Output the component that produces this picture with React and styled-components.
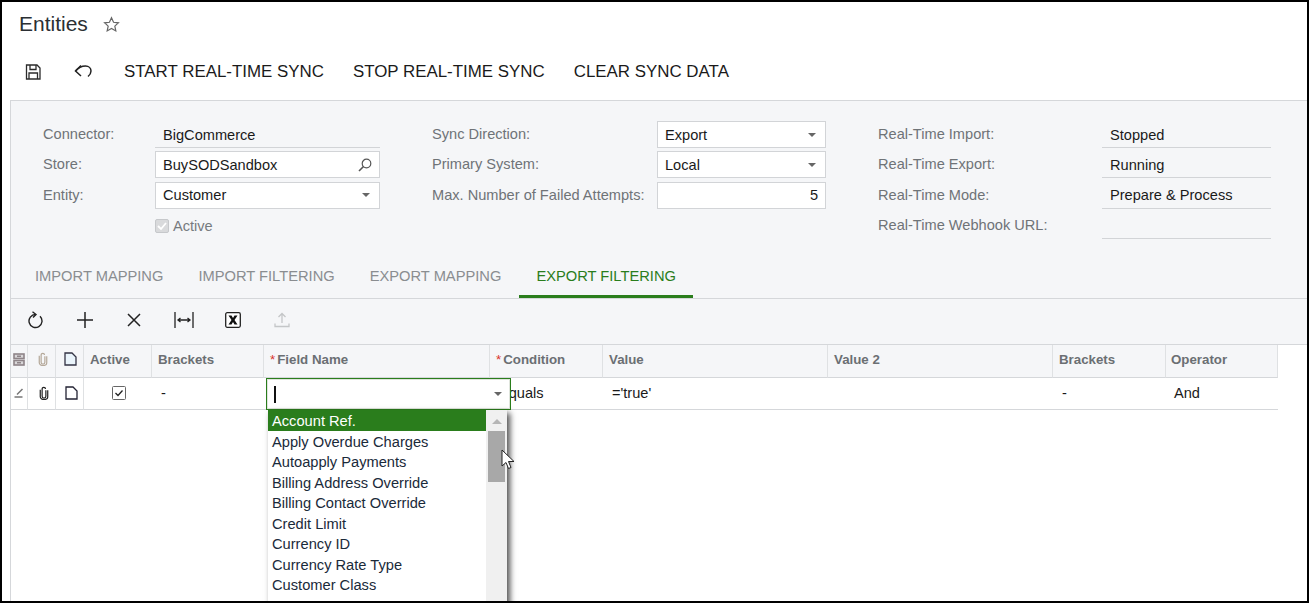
import React from "react";
import styled, { createGlobalStyle } from "styled-components";

const GlobalStyle = createGlobalStyle`
  html, body {
    margin: 0;
    padding: 0;
    background: #fff;
    overflow: hidden;
  }
  body {
    font-family: "Liberation Sans", Arial, sans-serif;
    font-size: 14.6px;
    color: #1c1c1c;
  }
`;

const Frame = styled.div`
  box-sizing: border-box;
  width: 1309px;
  height: 603px;
  border: 2px solid #000;
  overflow: hidden;
  background: #fff;
  position: relative;
  display: flex;
  flex-direction: column;
`;

const Title = styled.div`
  display: flex;
  align-items: center;
  gap: 15px;
  height: 44px;
  flex: none;
  padding-left: 17px;
  font-size: 21px;
  color: #2b2f33;
`;

const TopBar = styled.div`
  display: flex;
  align-items: center;
  box-sizing: border-box;
  height: 54px;
  flex: none;
  padding: 0 0 2px 22px;
`;

const IconBtn = styled.span`
  display: inline-flex;
  width: 20px;
  margin-right: ${(p) => p.$gap || 0}px;
`;

const TextBtn = styled.span`
  font-size: 16.9px;
  color: #1a1a1a;
  margin-right: 29px;
`;

const Body = styled.div`
  flex: 1;
  margin-left: 8px;
  border-left: 1px solid #d5d7da;
`;

const Summary = styled.div`
  background: #f5f6f8;
  border-top: 1px solid #d5d7da;
  height: 159px;
  padding-top: 19px;
  box-sizing: border-box;
  display: grid;
  grid-template-columns: 389px 446px 1fr;
`;

const FormCol = styled.div`
  display: grid;
  grid-template-columns: ${(p) => p.$label}px ${(p) => p.$field}px;
  grid-auto-rows: 30.4px;
  padding-left: ${(p) => p.$pad}px;
`;

const Label = styled.div`
  color: #6f7377;
  font-size: 14.6px;
  line-height: 28px;
  white-space: nowrap;
`;

const field = `
  box-sizing: border-box;
  height: 27px;
  align-self: start;
  margin-top: 1px;
  display: flex;
  align-items: center;
  font-size: 14.6px;
  color: #1a1a1a;
`;

const Readonly = styled.div`
  ${field}
  padding: 1px 8px 0;
  border-bottom: 1px solid #d2d4d7;
`;

const Input = styled.div`
  ${field}
  justify-content: ${(p) => (p.$right ? "flex-end" : "space-between")};
  padding: 0 7px;
  background: #fff;
  border: 1px solid #d2d4d7;
`;

const Caret = styled.span`
  width: 0;
  height: 0;
  border-left: 4px solid transparent;
  border-right: 4px solid transparent;
  border-top: 4px solid #666;
  margin-right: ${(p) => p.$mr || 0}px;
`;

const CheckRow = styled.div`
  grid-column: 2;
  display: flex;
  align-items: center;
  gap: 4px;
  height: 30px;
  color: #777b7f;
`;

const Disabled = styled.span`
  box-sizing: border-box;
  width: 14px;
  height: 14px;
  border: 1px solid #c6c8cb;
  border-radius: 2px;
  background: #d9dadc;
  display: inline-flex;
`;

const Tabs = styled.div`
  display: flex;
  height: 39px;
  padding-left: 6.5px;
  border-bottom: 1px solid #d5d7da;
  background: #f5f6f8;
`;

const Tab = styled.div`
  box-sizing: border-box;
  height: 39px;
  padding: 9px 17.5px 0;
  font-size: 14.7px;
  color: ${(p) => (p.$active ? "#2a7d1c" : "#8a8d90")};
  border-bottom: ${(p) => (p.$active ? "3px solid #2a7d1c" : "none")};
`;

const GridBar = styled.div`
  display: flex;
  align-items: center;
  height: 46px;
  padding: 0 0 4px 17px;
  background: #f5f6f8;
  border-bottom: 1px solid #d5d7da;
  box-sizing: border-box;
`;

const Table = styled.div`
  width: 1267px;
  display: grid;
  grid-template-columns: 17px 28px 28px 68px 112px 226px 113px 225px 225px 113px 112px;
`;

const Head = styled.div`
  box-sizing: border-box;
  height: 33px;
  background: #f5f6f8;
  border-right: 1px solid #dfe1e3;
  border-bottom: 1px solid #d5d7da;
  display: flex;
  align-items: center;
  justify-content: ${(p) => (p.$center ? "center" : "flex-start")};
  padding-left: ${(p) => (p.$center ? p.$shift || 0 : p.$pad || 6)}px;
  padding-bottom: 4px;
  font-size: 13.3px;
  font-weight: 700;
  color: #6b6f73;
`;

const Req = styled.span`
  color: #d9332b;
  margin-right: 2px;
  font-weight: 400;
`;

const Cell = styled.div`
  box-sizing: border-box;
  height: 32px;
  background: #fff;
  border-bottom: 1px solid #d5d7da;
  border-right: ${(p) => (p.$line ? "1px solid #dfe1e3" : "none")};
  display: flex;
  align-items: center;
  justify-content: ${(p) => (p.$center ? "center" : "flex-start")};
  padding-left: ${(p) => (p.$center ? p.$shift || 0 : p.$pad || 9)}px;
  padding-bottom: 1px;
  font-size: 14.6px;
  color: #1a1a1a;
  white-space: nowrap;
`;

const Editor = styled.div`
  position: absolute;
  left: 264px;
  top: 376px;
  width: 245px;
  height: 32px;
  box-sizing: border-box;
  background: #fff;
  border: 1px solid #2a7d1c;
  box-shadow: inset 0 0 0 1px #dfe5dc;
  display: flex;
  align-items: center;
  justify-content: space-between;
  padding: 0 8px 0 7px;
`;

const TextCursor = styled.span`
  width: 2px;
  height: 17px;
  background: #111;
`;

const DropDown = styled.div`
  position: absolute;
  left: 1px;
  top: 31px;
  width: 239px;
  height: 240px;
  display: flex;
  background: #fff;
  box-shadow: 3px 3px 6px rgba(0, 0, 0, 0.7);
`;

const ListItems = styled.div`
  flex: 1;
`;

const ListItem = styled.div`
  height: 20.5px;
  line-height: 22px;
  padding-left: 4px;
  font-size: 14.66px;
  color: ${(p) => (p.$selected ? "#fff" : "#1a2a3a")};
  background: ${(p) => (p.$selected ? "#2a7d1c" : "transparent")};
`;

const ScrollTrack = styled.div`
  width: 21px;
  flex: none;
  background: #f0f0f0;
  display: flex;
  flex-direction: column;
  align-items: center;
  padding-top: 9px;
  box-sizing: border-box;
`;

const ScrollUp = styled.span`
  width: 0;
  height: 0;
  border-left: 5px solid transparent;
  border-right: 5px solid transparent;
  border-bottom: 5px solid #b5b5b5;
`;

const ScrollThumb = styled.span`
  width: 17px;
  height: 51px;
  background: #a8a8a8;
  margin-top: 7px;
`;

const Pointer = styled.svg`
  position: absolute;
  left: 499px;
  top: 447px;
`;

const SaveIcon = () => (
  <svg width="18" height="18" viewBox="0 0 18 18" fill="none" stroke="#2b2b2b" strokeWidth="1.3">
    <path d="M2.5 2H13l3 3v11H2.500z" />
    <path d="M6 2v4.500h6V2M5 16v-6h8.500v6" />
  </svg>
);

const UndoIcon = () => (
  <svg width="20" height="16" viewBox="0 0 20 16" fill="none" stroke="#222" strokeWidth="1.5">
    <path d="M7 1.500L1.500 7 7 12" />
    <path d="M1.500 7C4 4 8 2 11.500 2c3.300 0 5.500 2.200 5.500 5 0 2.500-1.500 4.300-3 5.500" />
  </svg>
);

const RefreshIcon = () => (
  <svg width="16" height="18" viewBox="0 0 16 18" fill="none" stroke="#222" strokeWidth="1.4">
    <path d="M7.500 3.500A6.500 6.500 0 1 0 12 5.300" />
    <path d="M4.500 .8L8 3.500 5 6.500" />
  </svg>
);

const PlusIcon = () => (
  <svg width="18" height="18" viewBox="0 0 18 18" stroke="#222" strokeWidth="1.5">
    <path d="M1 9h16M9 1v16" />
  </svg>
);

const CloseIcon = () => (
  <svg width="16" height="16" viewBox="0 0 16 16" stroke="#222" strokeWidth="1.5">
    <path d="M2 2l12 12M14 2L2 14" />
  </svg>
);

const FitIcon = () => (
  <svg width="20" height="18" viewBox="0 0 20 18" fill="none" stroke="#222" strokeWidth="1.3">
    <path d="M1 1v16M19 1v16M4 9h12M6.500 7L4 9l2.500 2M13.500 7L16 9l-2.500 2" />
  </svg>
);

const ExcelIcon = () => (
  <svg width="16" height="16" viewBox="0 0 16 16">
    <rect x="0.7" y="0.7" width="14.6" height="14.6" rx="1.5" fill="#fff" stroke="#222" strokeWidth="1.3" />
    <path d="M3.500 3.500h3L8 6l1.500-2.500h3L9.500 8l3 4.500h-3L8 10l-1.500 2.500h-3L6.500 8z" fill="#111" />
  </svg>
);

const UploadIcon = () => (
  <svg width="16" height="16" viewBox="0 0 16 16" fill="none" stroke="#c4c6c8" strokeWidth="1.3">
    <path d="M8 11V1.500M4.500 5L8 1.500 11.500 5" />
    <path d="M1 11.500v3h14v-3" />
  </svg>
);

const ColumnsIcon = () => (
  <svg width="12" height="13" viewBox="0 0 12 13" fill="#d9d7d9" stroke="#8e8488" strokeWidth="1.6">
    <rect x="1" y="1" width="10" height="4.5" />
    <rect x="1" y="7.5" width="10" height="4.5" />
    <path d="M4 3.300h4M4 9.800h4" />
  </svg>
);

const ClipIcon = ({ color }) => (
  <svg width="10" height="14" viewBox="0 0 10 15" fill="none" stroke={color} strokeWidth="1.3">
    <path d="M7 4.500V11a2 2 0 0 1-4 0V3.200a1.800 1.800 0 0 1 3.600 0" />
    <path d="M9 4.500v7a4 3 0 0 1-8 0V4" />
  </svg>
);

const PageIcon = ({ color, fill }) => (
  <svg width="13" height="14" viewBox="0 0 13 14" fill={fill || "#fff"} stroke={color} strokeWidth="1.3">
    <path d="M1 1h7l4 4v8H1z" />
  </svg>
);

const forms = {
  first: [
    ["Connector:", <Readonly key="c">BigCommerce</Readonly>],
    [
      "Store:",
      <Input key="s">
        BuySODSandbox
        <svg width="14" height="14" viewBox="0 0 14 14" fill="none" stroke="#555" strokeWidth="1.2">
          <circle cx="8.5" cy="5.5" r="4.3" />
          <path d="M5.500 8.500L1 13" strokeWidth="1.6" />
        </svg>
      </Input>,
    ],
    [
      "Entity:",
      <Input key="e">
        Customer
        <Caret $mr={2} />
      </Input>,
    ],
  ],
  second: [
    [
      "Sync Direction:",
      <Input key="d">
        Export
        <Caret $mr={2} />
      </Input>,
    ],
    [
      "Primary System:",
      <Input key="p">
        Local
        <Caret $mr={2} />
      </Input>,
    ],
    [
      "Max. Number of Failed Attempts:",
      <Input key="m" $right>
        5
      </Input>,
    ],
  ],
  third: [
    ["Real-Time Import:", <Readonly key="i">Stopped</Readonly>],
    ["Real-Time Export:", <Readonly key="x">Running</Readonly>],
    ["Real-Time Mode:", <Readonly key="o">Prepare &amp; Process</Readonly>],
    ["Real-Time Webhook URL:", <Readonly key="u" />],
  ],
};

const options = [
  "Account Ref.",
  "Apply Overdue Charges",
  "Autoapply Payments",
  "Billing Address Override",
  "Billing Contact Override",
  "Credit Limit",
  "Currency ID",
  "Currency Rate Type",
  "Customer Class",
  "Customer Name",
  "Customer Status",
  "Email",
];

const renderRows = (rows) =>
  rows.map(([label, control]) => (
    <React.Fragment key={label}>
      <Label>{label}</Label>
      {control}
    </React.Fragment>
  ));

export default function App() {
  return (
    <Frame>
      <GlobalStyle />
      <Title>
        Entities
        <svg width="17" height="17" viewBox="0 0 24 24" fill="none" stroke="#666" strokeWidth="1.7">
          <path d="M12 2.500l2.900 6.300 6.900.8-5.100 4.700 1.400 6.800-6.100-3.400-6.100 3.400 1.400-6.800-5.100-4.700 6.900-.8z" />
        </svg>
      </Title>
      <TopBar>
        <IconBtn $gap={30}>
          <SaveIcon />
        </IconBtn>
        <IconBtn $gap={30}>
          <UndoIcon />
        </IconBtn>
        <TextBtn>START REAL-TIME SYNC</TextBtn>
        <TextBtn>STOP REAL-TIME SYNC</TextBtn>
        <TextBtn>CLEAR SYNC DATA</TextBtn>
      </TopBar>
      <Body>
        <Summary>
          <FormCol $pad={32} $label={112} $field={225}>
            {renderRows(forms.first)}
            <CheckRow>
              <Disabled>
                <svg width="12" height="12" viewBox="0 0 12 12" fill="none" stroke="#fff" strokeWidth="1.8">
                  <path d="M2 6l3 3 5-6" />
                </svg>
              </Disabled>
              Active
            </CheckRow>
          </FormCol>
          <FormCol $pad={32} $label={225} $field={169}>
            {renderRows(forms.second)}
          </FormCol>
          <FormCol $pad={32} $label={224} $field={169}>
            {renderRows(forms.third)}
          </FormCol>
        </Summary>
        <Tabs>
          <Tab>IMPORT MAPPING</Tab>
          <Tab>IMPORT FILTERING</Tab>
          <Tab>EXPORT MAPPING</Tab>
          <Tab $active>EXPORT FILTERING</Tab>
        </Tabs>
        <GridBar>
          <IconBtn $gap={28}>
            <RefreshIcon />
          </IconBtn>
          <IconBtn $gap={30}>
            <PlusIcon />
          </IconBtn>
          <IconBtn $gap={28}>
            <CloseIcon />
          </IconBtn>
          <IconBtn $gap={31}>
            <FitIcon />
          </IconBtn>
          <IconBtn $gap={29}>
            <ExcelIcon />
          </IconBtn>
          <IconBtn>
            <UploadIcon />
          </IconBtn>
        </GridBar>
        <Table>
          <Head $center>
            <ColumnsIcon />
          </Head>
          <Head $center $shift={2}>
            <ClipIcon color="#b5a99a" />
          </Head>
          <Head $center $shift={2}>
            <PageIcon color="#334" fill="#eaf4fb" />
          </Head>
          <Head>Active</Head>
          <Head>Brackets</Head>
          <Head>
            <Req>*</Req>Field Name
          </Head>
          <Head>
            <Req>*</Req>Condition
          </Head>
          <Head>Value</Head>
          <Head>Value 2</Head>
          <Head>Brackets</Head>
          <Head $pad={5}>Operator</Head>

          <Cell $center $line>
            <svg width="10" height="10" viewBox="0 0 10 10" fill="none" stroke="#777" strokeWidth="1.5">
              <path d="M3 6.500L8.500 1M0.500 9h8" />
            </svg>
          </Cell>
          <Cell $center $line $shift={4}>
            <ClipIcon color="#222" />
          </Cell>
          <Cell $center $line $shift={4}>
            <PageIcon color="#223" />
          </Cell>
          <Cell $center $shift={2}>
            <svg width="14" height="14" viewBox="0 0 14 14" fill="none" stroke="#222">
              <rect x="0.5" y="0.5" width="13" height="13" rx="1" stroke="#666" />
              <path d="M3.500 7l2.500 2.500 4.500-5" strokeWidth="1.3" />
            </svg>
          </Cell>
          <Cell>-</Cell>
          <Cell />
          <Cell>Equals</Cell>
          <Cell>=&apos;true&apos;</Cell>
          <Cell />
          <Cell>-</Cell>
          <Cell $pad={8}>And</Cell>
        </Table>
      </Body>
      <Editor>
        <TextCursor />
        <Caret />
        <DropDown>
          <ListItems>
            {options.map((o, i) => (
              <ListItem key={o} $selected={i === 0}>
                {o}
              </ListItem>
            ))}
          </ListItems>
          <ScrollTrack>
            <ScrollUp />
            <ScrollThumb />
          </ScrollTrack>
        </DropDown>
      </Editor>
      <Pointer width="14" height="22" viewBox="0 0 14 22">
        <path d="M1 1v16l4-3.500 2.500 6 2.500-1-2.500-6H13z" fill="#fff" stroke="#222" strokeWidth="1" />
      </Pointer>
    </Frame>
  );
}
